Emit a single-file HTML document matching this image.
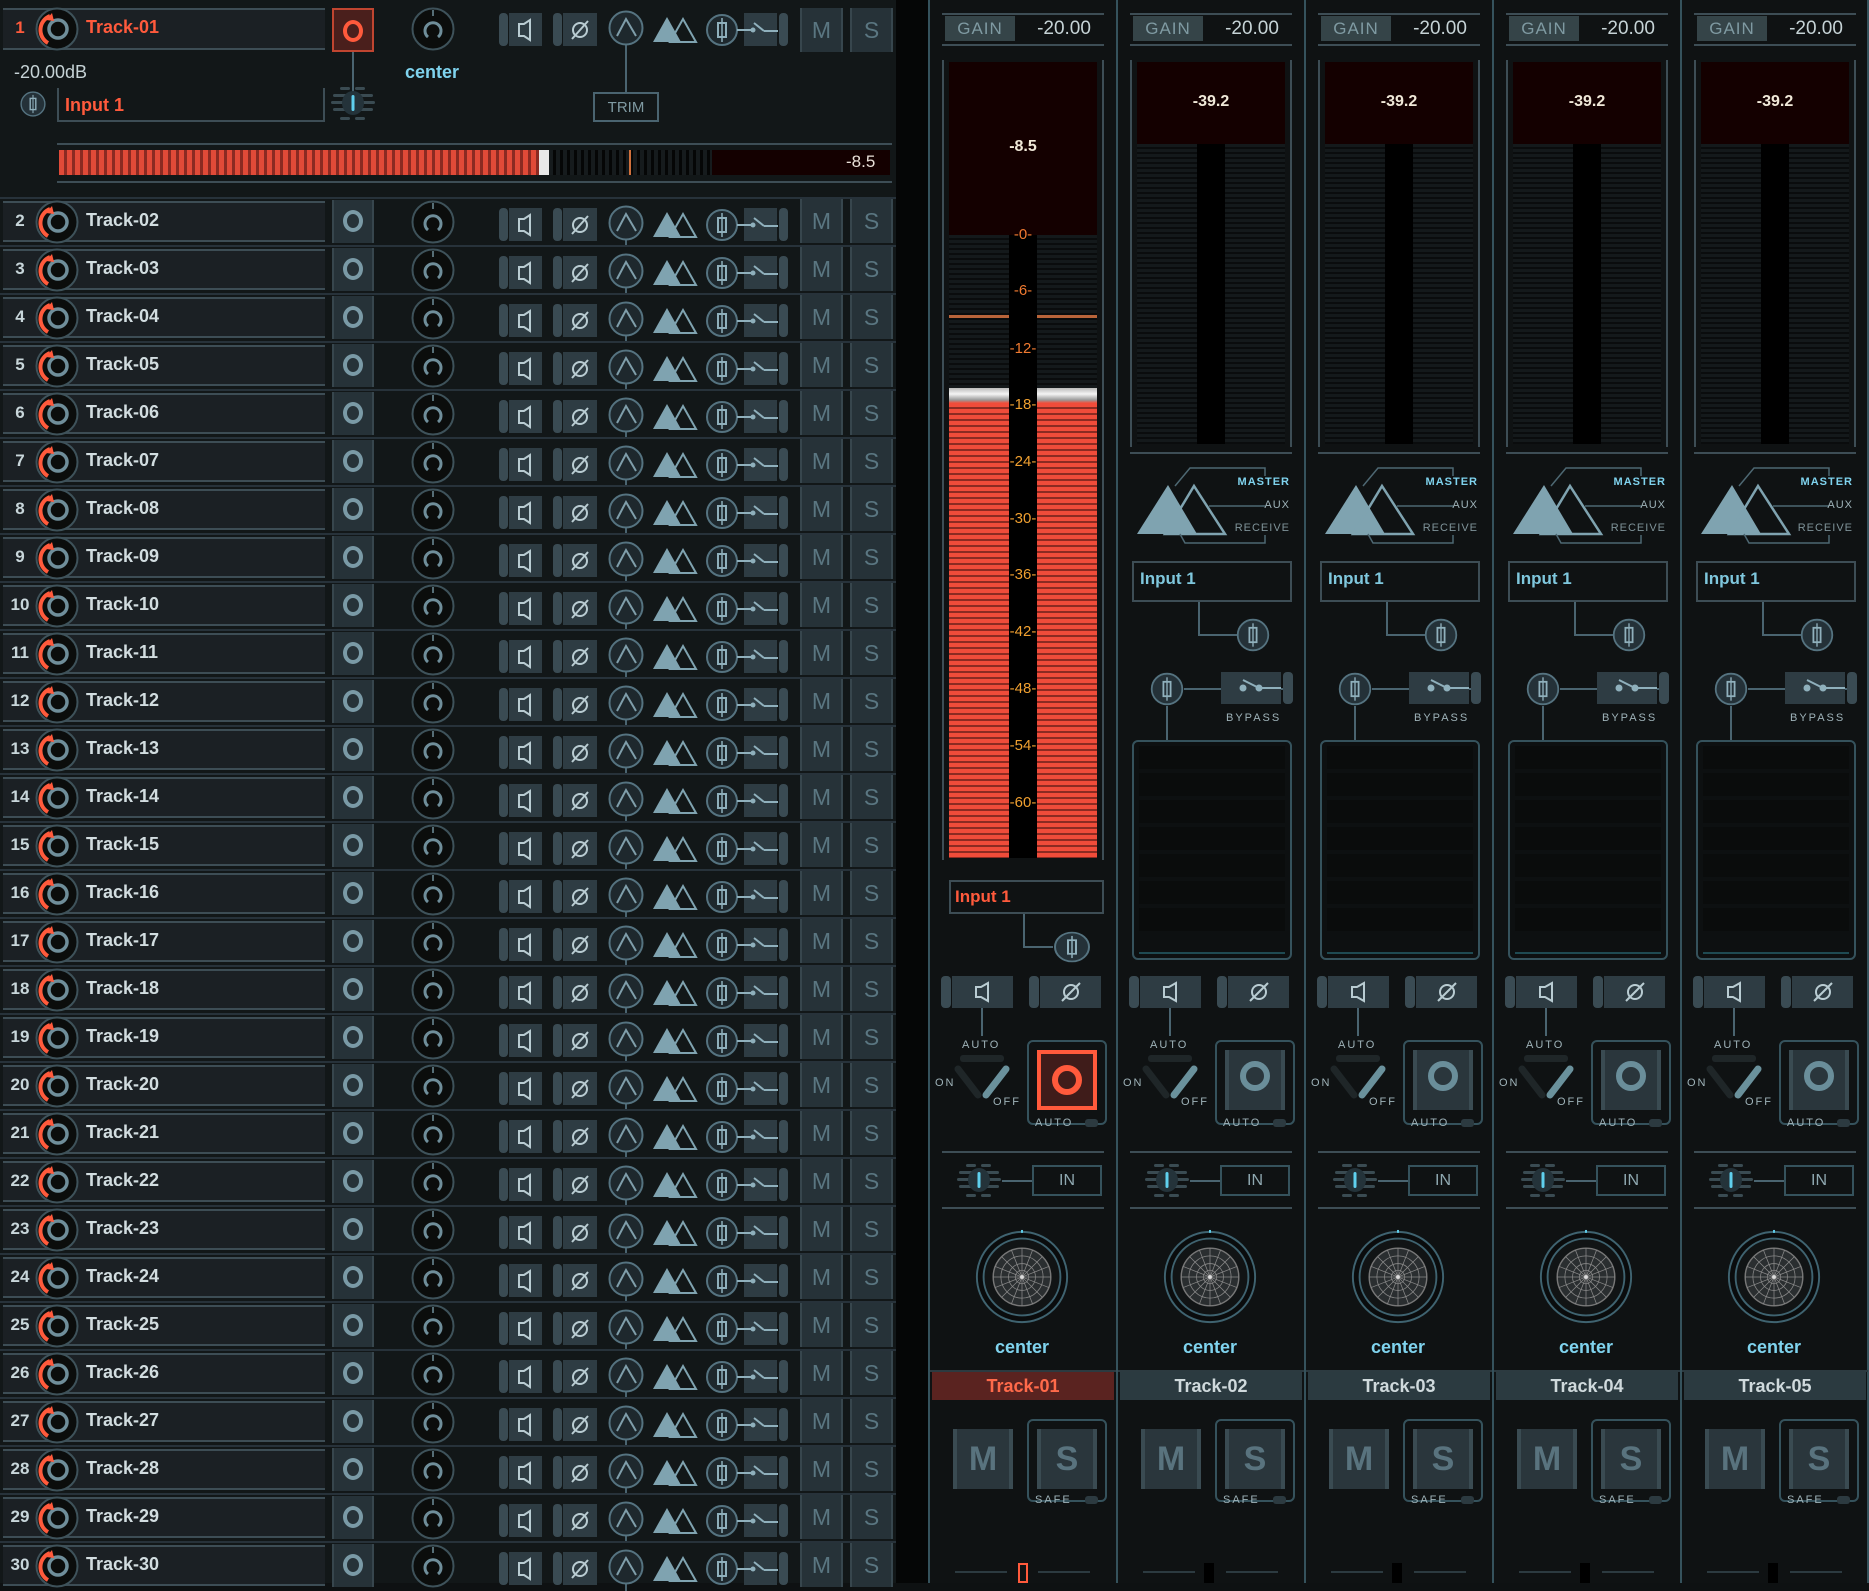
<!DOCTYPE html>
<html><head><meta charset="utf-8">
<style>
*{margin:0;padding:0;box-sizing:border-box}
body{width:1869px;height:1583px;background:#0e1112;overflow:hidden;position:relative;font-family:"Liberation Sans",sans-serif;font-weight:bold}
.a{position:absolute}
#left{position:absolute;left:0;top:0;width:896px;height:1583px;background:#121718}
.r{position:absolute;left:0;width:896px;height:48px;border-top:2px solid #27323a}
.nb{position:absolute;left:3px;top:2px;width:322px;height:41px;background:#1b2024;border-top:2px solid #3d4d55;border-bottom:2px solid #3d4d55}
.n{position:absolute;left:2px;width:36px;top:12px;text-align:center;font-size:17px;color:#c8d6da}
.k{position:absolute;left:35px;top:1px;width:44px;height:44px}
.t{position:absolute;left:86px;top:11px;font-size:18px;color:#d2dde0}
.rec{position:absolute;left:332px;top:1px;width:42px;height:43px;background:#263238;border-left:2px solid #37464d;border-right:2px solid #37464d}
.rec i{position:absolute;left:9px;top:10px;width:20px;height:22px;border:4px solid #7a9aa6;border-radius:50%}
.pk{position:absolute;left:411px;top:1px;width:44px;height:44px}
.tl{position:absolute;left:490px;top:0;width:310px;height:48px}
.m,.s{position:absolute;top:0;width:43px;height:44px;background:#263238;border-left:2px solid #37464d;border-right:2px solid #37464d;color:#5a7681;font-size:23px;text-align:center;line-height:44px;font-weight:normal}
.m{left:800px}.s{left:850px}
.st{position:absolute;top:0;width:188px;height:1583px;border-left:2px solid #35525c;background:#0f1213}
.gl{position:absolute;left:15px;top:16px;width:70px;height:25px;background:#354448;color:#7f9aa2;font-size:17px;text-align:center;line-height:25px;letter-spacing:1px;font-weight:normal}
.gv{position:absolute;left:94px;top:18px;width:80px;text-align:center;color:#c6d3d6;font-size:19px;font-weight:normal}
.gbox{position:absolute;left:12px;top:13px;width:162px;height:33px;border-top:2px solid #3d4d55;border-bottom:2px solid #3d4d55}
.mf{position:absolute;left:12px;top:60px;width:162px;border-left:2px solid #3d4d55;border-right:2px solid #3d4d55}
.dm{position:absolute;left:19px;width:148px;background:repeating-linear-gradient(180deg,#14191b 0 3px,#0a0c0d 3px 5px)}
.dr{position:absolute;left:19px;width:148px;background:#140000}
.col{position:absolute;left:79px;width:28px;background:#000}
.rv{position:absolute;left:19px;width:148px;text-align:center;color:#f0e8d8;font-size:16px}
.ib{position:absolute;left:14px;width:160px;border-top:2px solid #3d4d55;border-bottom:2px solid #3d4d55;border-left:2px solid #3d4d55;border-right:2px solid #3d4d55}
.ib span{position:absolute;left:6px;top:6px;font-size:17px}
.lbl{position:absolute;font-size:11px;color:#9fb3b9;letter-spacing:2px;font-weight:normal}
.ins{position:absolute;left:14px;top:740px;width:160px;height:220px;border:2px solid #35525c;border-radius:6px;background:#0d1011}
.ins::before{content:"";position:absolute;left:5px;top:4px;width:146px;height:189px;background:repeating-linear-gradient(180deg,#0a0c0c 0 23px,#0d1011 23px 27px)}
.ins::after{content:"";position:absolute;left:5px;bottom:4px;width:146px;height:2px;background:#1f4a52}
.btn{position:absolute;top:976px;height:32px}
.nm{position:absolute;left:2px;top:1372px;width:182px;height:28px;background:#2b3a40;color:#cfd9dc;font-size:18px;text-align:center;line-height:28px}
.cen{position:absolute;left:0;width:184px;top:1337px;text-align:center;color:#7fd3ee;font-size:18px}
.bm,.bs{position:absolute;top:1429px;width:60px;height:60px;background:#2a363c;border-left:4px solid #3a4b52;border-right:4px solid #3a4b52;color:#59737e;font-size:34px;text-align:center;line-height:60px}
.bm{left:23px}.bs{left:107px}
.sbox{position:absolute;left:97px;top:1419px;width:80px;height:83px;border:2px solid #35525c;border-radius:6px}
.snd{position:absolute;left:0;top:460px;width:188px;height:90px}
.sl{position:absolute;right:14px;font-size:11px;letter-spacing:1px;font-weight:normal;color:#9fb3b9}
.sc{position:absolute;left:73px;width:40px;color:#f08a30;font-size:15px;text-align:center;font-weight:normal}
</style></head><body>
<svg width="0" height="0" style="position:absolute">
<defs>
<symbol id="knob" viewBox="0 0 44 44"><circle cx="22" cy="22" r="20.5" fill="#0b0d0c" stroke="#3e525a" stroke-width="2"/><circle cx="23" cy="22" r="9" fill="none" stroke="#6f8e9a" stroke-width="3.5"/><path d="M13 36 A15 15 0 0 1 15 9" fill="none" stroke="#ff5a3c" stroke-width="4"/><path d="M11 13 L17 6 L19 14 Z" fill="#ff5a3c"/></symbol>
<symbol id="pan" viewBox="0 0 44 44"><circle cx="22" cy="22" r="20.5" fill="#0b0d0c" stroke="#3e525a" stroke-width="2"/><path d="M17 30 A8 8 0 1 1 27 30" fill="none" stroke="#6f8e9a" stroke-width="3"/><line x1="22" y1="3" x2="22" y2="9" stroke="#6f8e9a" stroke-width="1.5"/></symbol>
<symbol id="tools" viewBox="0 0 310 48">
<rect x="9" y="9" width="9" height="33" rx="4" fill="#3a4b53"/><rect x="19" y="9" width="33" height="33" fill="#2e3c43"/><path d="M29 20 h5 l6 -4 v20 l-6 -4 h-5 z" fill="none" stroke="#b9ccd2" stroke-width="2"/>
<rect x="63" y="9" width="9" height="33" rx="4" fill="#3a4b53"/><rect x="73" y="9" width="34" height="33" fill="#2e3c43"/><circle cx="90" cy="26" r="7" fill="none" stroke="#b9ccd2" stroke-width="2"/><line x1="82" y1="35" x2="98" y2="17" stroke="#b9ccd2" stroke-width="2"/>
<line x1="136" y1="40" x2="136" y2="48" stroke="#4a6470" stroke-width="2"/><circle cx="136" cy="24" r="16.5" fill="#1e282d" stroke="#557380" stroke-width="2"/><path d="M127 32 L136 15 L146 32" fill="none" stroke="#7f9eaa" stroke-width="2"/>
<polygon points="163,38 177,13 191,38" fill="#7fa3b0"/><polygon points="180,38 193,15 206,38" fill="none" stroke="#7fa3b0" stroke-width="2"/>
<circle cx="232" cy="26" r="15" fill="#1e282d" stroke="#557380" stroke-width="2"/><rect x="228" y="19" width="8" height="14" fill="none" stroke="#8fb0bc" stroke-width="2"/><line x1="232" y1="14" x2="232" y2="38" stroke="#8fb0bc" stroke-width="1.5"/>
<rect x="254" y="9" width="33" height="33" fill="#2e3c43"/><rect x="289" y="9" width="9" height="33" rx="4" fill="#3a4b53"/><line x1="247" y1="26" x2="262" y2="26" stroke="#8fb0bc" stroke-width="2"/><circle cx="263" cy="26" r="2.5" fill="#8fb0bc"/><line x1="264" y1="19" x2="274" y2="27" stroke="#8fb0bc" stroke-width="2"/><line x1="274" y1="27" x2="288" y2="27" stroke="#8fb0bc" stroke-width="2"/>
</symbol>
<symbol id="mic" viewBox="0 0 40 40"><circle cx="20" cy="20" r="17" fill="#243138" stroke="#557380" stroke-width="2"/><rect x="16" y="12" width="8" height="16" fill="none" stroke="#8fb0bc" stroke-width="2"/><line x1="20" y1="7" x2="20" y2="33" stroke="#8fb0bc" stroke-width="1.5"/></symbol>
<symbol id="fad" viewBox="0 0 44 36"><g fill="#3a4b52"><rect x="9" y="1" width="10" height="3" rx="1.5"/><rect x="24" y="1" width="10" height="3" rx="1.5"/><rect x="2" y="8" width="40" height="3" rx="1.5"/><rect x="0" y="15" width="44" height="3" rx="1.5"/><rect x="2" y="22" width="40" height="3" rx="1.5"/><rect x="9" y="31" width="10" height="3" rx="1.5"/><rect x="24" y="31" width="10" height="3" rx="1.5"/></g><ellipse cx="22" cy="17" rx="11" ry="12" fill="#24333a"/><rect x="20.5" y="9" width="3" height="16" rx="1.5" fill="#5fd0ee"/></symbol>
<symbol id="panbig" viewBox="0 0 100 100"><circle cx="50" cy="50" r="47" fill="#0a0c0d" stroke="#3f6370" stroke-width="2"/><circle cx="50" cy="50" r="40" fill="#111415" stroke="#3f6370" stroke-width="2"/><circle cx="50" cy="50" r="30" fill="#2a2e30" stroke="#777" stroke-width="1.5"/><g stroke="#888" stroke-width="0.8" fill="none"><circle cx="50" cy="50" r="22"/><circle cx="50" cy="50" r="14"/><circle cx="50" cy="50" r="7"/><path d="M50 20V80M20 50H80M29 29L71 71M71 29L29 71M39 22L61 78M61 22L39 78M22 39L78 61M22 61L78 39"/></g><circle cx="50" cy="50" r="2" fill="#ddd"/><rect x="49" y="1" width="2" height="3" fill="#5fd0ee"/></symbol>
<symbol id="sends" viewBox="0 0 188 90"><polygon points="19,74 50,25 79,74" fill="#7fa3b0"/><polygon points="47,74 76,26 107,74" fill="none" stroke="#7fa3b0" stroke-width="2.5"/><path d="M57 26 L72 8 H147 V16" fill="none" stroke="#4d6772" stroke-width="1.5"/><path d="M91 46 H147" stroke="#4d6772" stroke-width="1.5"/><path d="M62 74 L67 83 H147 V75" fill="none" stroke="#4d6772" stroke-width="1.5"/></symbol>
</defs></svg>

<div id="left">
<div class="nb" style="top:8px;height:42px"></div>
<span class="n" style="top:18px;color:#ff5a3c">1</span>
<svg class="k" style="top:7px"><use href="#knob"/></svg>
<span class="t" style="top:17px;color:#ff5a3c">Track-01</span>
<div class="a" style="left:332px;top:8px;width:42px;height:44px;background:#4a1f1c;border:2px solid #c04530"><i class="a" style="left:9px;top:10px;width:20px;height:22px;border:4px solid #ff5a3c;border-radius:50%"></i></div>
<div class="a" style="left:352px;top:52px;width:2px;height:40px;background:#4a6470"></div>
<svg class="pk" style="top:7px"><use href="#pan"/></svg>
<svg class="tl" style="top:4px;height:48px"><use href="#tools"/></svg>
<div class="m" style="top:8px">M</div><div class="s" style="top:8px">S</div>
<div class="a" style="left:625px;top:52px;width:2px;height:42px;background:#4a6470"></div>
<div class="a" style="left:593px;top:92px;width:66px;height:30px;border:2px solid #4a6470;color:#7f9aa2;font-size:15px;text-align:center;line-height:27px;font-weight:normal">TRIM</div>
<div class="a" style="left:14px;top:62px;font-size:18px;color:#c6d3d6;font-weight:normal">-20.00dB</div>
<div class="a" style="left:405px;top:62px;font-size:18px;color:#7fd3ee">center</div>
<svg class="a" style="left:19px;top:90px;width:28px;height:28px" viewBox="0 0 40 40"><use href="#mic"/></svg>
<div class="a" style="left:57px;top:88px;width:268px;height:34px;border-left:2px solid #3d4d55;border-right:2px solid #3d4d55;border-bottom:2px solid #3d4d55"></div>
<div class="a" style="left:65px;top:95px;font-size:18px;color:#ff5a3c">Input 1</div>
<svg class="a" style="left:331px;top:86px;width:44px;height:36px"><use href="#fad"/></svg>
<div class="a" style="left:57px;top:143px;width:835px;height:2px;background:#3d4d55"></div>
<div class="a" style="left:57px;top:181px;width:835px;height:2px;background:#3d4d55"></div>
<div class="a" style="left:59px;top:150px;width:480px;height:25px;background:repeating-linear-gradient(90deg,#e04a38 0 5px,#8a2a22 5px 8px)"></div>
<div class="a" style="left:539px;top:150px;width:10px;height:25px;background:#e8e8e8"></div>
<div class="a" style="left:549px;top:150px;width:163px;height:25px;background:repeating-linear-gradient(90deg,#161b1d 0 4px,#050606 4px 7px)"></div>
<div class="a" style="left:629px;top:150px;width:2px;height:25px;background:#d0703c"></div>
<div class="a" style="left:712px;top:150px;width:178px;height:25px;background:#140000"></div>
<div class="a" style="left:846px;top:152px;font-size:17px;color:#e8e0d8;font-weight:normal">-8.5</div>

<div class="r" style="top:197px"><div class="nb"></div><span class="n">2</span><svg class="k"><use href="#knob"/></svg><span class="t">Track-02</span><div class="rec"><i></i></div><svg class="pk"><use href="#pan"/></svg><svg class="tl"><use href="#tools"/></svg><div class="m">M</div><div class="s">S</div></div>
<div class="r" style="top:245px"><div class="nb"></div><span class="n">3</span><svg class="k"><use href="#knob"/></svg><span class="t">Track-03</span><div class="rec"><i></i></div><svg class="pk"><use href="#pan"/></svg><svg class="tl"><use href="#tools"/></svg><div class="m">M</div><div class="s">S</div></div>
<div class="r" style="top:293px"><div class="nb"></div><span class="n">4</span><svg class="k"><use href="#knob"/></svg><span class="t">Track-04</span><div class="rec"><i></i></div><svg class="pk"><use href="#pan"/></svg><svg class="tl"><use href="#tools"/></svg><div class="m">M</div><div class="s">S</div></div>
<div class="r" style="top:341px"><div class="nb"></div><span class="n">5</span><svg class="k"><use href="#knob"/></svg><span class="t">Track-05</span><div class="rec"><i></i></div><svg class="pk"><use href="#pan"/></svg><svg class="tl"><use href="#tools"/></svg><div class="m">M</div><div class="s">S</div></div>
<div class="r" style="top:389px"><div class="nb"></div><span class="n">6</span><svg class="k"><use href="#knob"/></svg><span class="t">Track-06</span><div class="rec"><i></i></div><svg class="pk"><use href="#pan"/></svg><svg class="tl"><use href="#tools"/></svg><div class="m">M</div><div class="s">S</div></div>
<div class="r" style="top:437px"><div class="nb"></div><span class="n">7</span><svg class="k"><use href="#knob"/></svg><span class="t">Track-07</span><div class="rec"><i></i></div><svg class="pk"><use href="#pan"/></svg><svg class="tl"><use href="#tools"/></svg><div class="m">M</div><div class="s">S</div></div>
<div class="r" style="top:485px"><div class="nb"></div><span class="n">8</span><svg class="k"><use href="#knob"/></svg><span class="t">Track-08</span><div class="rec"><i></i></div><svg class="pk"><use href="#pan"/></svg><svg class="tl"><use href="#tools"/></svg><div class="m">M</div><div class="s">S</div></div>
<div class="r" style="top:533px"><div class="nb"></div><span class="n">9</span><svg class="k"><use href="#knob"/></svg><span class="t">Track-09</span><div class="rec"><i></i></div><svg class="pk"><use href="#pan"/></svg><svg class="tl"><use href="#tools"/></svg><div class="m">M</div><div class="s">S</div></div>
<div class="r" style="top:581px"><div class="nb"></div><span class="n">10</span><svg class="k"><use href="#knob"/></svg><span class="t">Track-10</span><div class="rec"><i></i></div><svg class="pk"><use href="#pan"/></svg><svg class="tl"><use href="#tools"/></svg><div class="m">M</div><div class="s">S</div></div>
<div class="r" style="top:629px"><div class="nb"></div><span class="n">11</span><svg class="k"><use href="#knob"/></svg><span class="t">Track-11</span><div class="rec"><i></i></div><svg class="pk"><use href="#pan"/></svg><svg class="tl"><use href="#tools"/></svg><div class="m">M</div><div class="s">S</div></div>
<div class="r" style="top:677px"><div class="nb"></div><span class="n">12</span><svg class="k"><use href="#knob"/></svg><span class="t">Track-12</span><div class="rec"><i></i></div><svg class="pk"><use href="#pan"/></svg><svg class="tl"><use href="#tools"/></svg><div class="m">M</div><div class="s">S</div></div>
<div class="r" style="top:725px"><div class="nb"></div><span class="n">13</span><svg class="k"><use href="#knob"/></svg><span class="t">Track-13</span><div class="rec"><i></i></div><svg class="pk"><use href="#pan"/></svg><svg class="tl"><use href="#tools"/></svg><div class="m">M</div><div class="s">S</div></div>
<div class="r" style="top:773px"><div class="nb"></div><span class="n">14</span><svg class="k"><use href="#knob"/></svg><span class="t">Track-14</span><div class="rec"><i></i></div><svg class="pk"><use href="#pan"/></svg><svg class="tl"><use href="#tools"/></svg><div class="m">M</div><div class="s">S</div></div>
<div class="r" style="top:821px"><div class="nb"></div><span class="n">15</span><svg class="k"><use href="#knob"/></svg><span class="t">Track-15</span><div class="rec"><i></i></div><svg class="pk"><use href="#pan"/></svg><svg class="tl"><use href="#tools"/></svg><div class="m">M</div><div class="s">S</div></div>
<div class="r" style="top:869px"><div class="nb"></div><span class="n">16</span><svg class="k"><use href="#knob"/></svg><span class="t">Track-16</span><div class="rec"><i></i></div><svg class="pk"><use href="#pan"/></svg><svg class="tl"><use href="#tools"/></svg><div class="m">M</div><div class="s">S</div></div>
<div class="r" style="top:917px"><div class="nb"></div><span class="n">17</span><svg class="k"><use href="#knob"/></svg><span class="t">Track-17</span><div class="rec"><i></i></div><svg class="pk"><use href="#pan"/></svg><svg class="tl"><use href="#tools"/></svg><div class="m">M</div><div class="s">S</div></div>
<div class="r" style="top:965px"><div class="nb"></div><span class="n">18</span><svg class="k"><use href="#knob"/></svg><span class="t">Track-18</span><div class="rec"><i></i></div><svg class="pk"><use href="#pan"/></svg><svg class="tl"><use href="#tools"/></svg><div class="m">M</div><div class="s">S</div></div>
<div class="r" style="top:1013px"><div class="nb"></div><span class="n">19</span><svg class="k"><use href="#knob"/></svg><span class="t">Track-19</span><div class="rec"><i></i></div><svg class="pk"><use href="#pan"/></svg><svg class="tl"><use href="#tools"/></svg><div class="m">M</div><div class="s">S</div></div>
<div class="r" style="top:1061px"><div class="nb"></div><span class="n">20</span><svg class="k"><use href="#knob"/></svg><span class="t">Track-20</span><div class="rec"><i></i></div><svg class="pk"><use href="#pan"/></svg><svg class="tl"><use href="#tools"/></svg><div class="m">M</div><div class="s">S</div></div>
<div class="r" style="top:1109px"><div class="nb"></div><span class="n">21</span><svg class="k"><use href="#knob"/></svg><span class="t">Track-21</span><div class="rec"><i></i></div><svg class="pk"><use href="#pan"/></svg><svg class="tl"><use href="#tools"/></svg><div class="m">M</div><div class="s">S</div></div>
<div class="r" style="top:1157px"><div class="nb"></div><span class="n">22</span><svg class="k"><use href="#knob"/></svg><span class="t">Track-22</span><div class="rec"><i></i></div><svg class="pk"><use href="#pan"/></svg><svg class="tl"><use href="#tools"/></svg><div class="m">M</div><div class="s">S</div></div>
<div class="r" style="top:1205px"><div class="nb"></div><span class="n">23</span><svg class="k"><use href="#knob"/></svg><span class="t">Track-23</span><div class="rec"><i></i></div><svg class="pk"><use href="#pan"/></svg><svg class="tl"><use href="#tools"/></svg><div class="m">M</div><div class="s">S</div></div>
<div class="r" style="top:1253px"><div class="nb"></div><span class="n">24</span><svg class="k"><use href="#knob"/></svg><span class="t">Track-24</span><div class="rec"><i></i></div><svg class="pk"><use href="#pan"/></svg><svg class="tl"><use href="#tools"/></svg><div class="m">M</div><div class="s">S</div></div>
<div class="r" style="top:1301px"><div class="nb"></div><span class="n">25</span><svg class="k"><use href="#knob"/></svg><span class="t">Track-25</span><div class="rec"><i></i></div><svg class="pk"><use href="#pan"/></svg><svg class="tl"><use href="#tools"/></svg><div class="m">M</div><div class="s">S</div></div>
<div class="r" style="top:1349px"><div class="nb"></div><span class="n">26</span><svg class="k"><use href="#knob"/></svg><span class="t">Track-26</span><div class="rec"><i></i></div><svg class="pk"><use href="#pan"/></svg><svg class="tl"><use href="#tools"/></svg><div class="m">M</div><div class="s">S</div></div>
<div class="r" style="top:1397px"><div class="nb"></div><span class="n">27</span><svg class="k"><use href="#knob"/></svg><span class="t">Track-27</span><div class="rec"><i></i></div><svg class="pk"><use href="#pan"/></svg><svg class="tl"><use href="#tools"/></svg><div class="m">M</div><div class="s">S</div></div>
<div class="r" style="top:1445px"><div class="nb"></div><span class="n">28</span><svg class="k"><use href="#knob"/></svg><span class="t">Track-28</span><div class="rec"><i></i></div><svg class="pk"><use href="#pan"/></svg><svg class="tl"><use href="#tools"/></svg><div class="m">M</div><div class="s">S</div></div>
<div class="r" style="top:1493px"><div class="nb"></div><span class="n">29</span><svg class="k"><use href="#knob"/></svg><span class="t">Track-29</span><div class="rec"><i></i></div><svg class="pk"><use href="#pan"/></svg><svg class="tl"><use href="#tools"/></svg><div class="m">M</div><div class="s">S</div></div>
<div class="r" style="top:1541px"><div class="nb"></div><span class="n">30</span><svg class="k"><use href="#knob"/></svg><span class="t">Track-30</span><div class="rec"><i></i></div><svg class="pk"><use href="#pan"/></svg><svg class="tl"><use href="#tools"/></svg><div class="m">M</div><div class="s">S</div></div>
</div>
<div class="a" style="left:896px;top:0;width:33px;height:1583px;background:#050606"></div>

<!-- STRIP 1 -->
<div class="st" style="left:928px">
<div class="gbox"></div><div class="gl">GAIN</div><div class="gv">-20.00</div>
<div class="mf" style="height:800px"></div>
<div class="dr" style="top:62px;height:173px"></div>
<div class="rv" style="top:138px">-8.5</div>
<div class="dm" style="top:235px;height:153px"></div>
<div class="a" style="left:19px;top:315px;width:148px;height:3px;background:#b8643a"></div>
<div class="a" style="left:19px;top:388px;width:148px;height:15px;background:linear-gradient(#bbb,#f4f4f4 40%,#999 80%,#f0503c)"></div>
<div class="a" style="left:19px;top:403px;width:148px;height:455px;background:repeating-linear-gradient(180deg,#f04c3a 0 4px,#8c2b22 4px 6px)"></div>
<div class="col" style="top:235px;height:623px"></div>
<div class="sc" style="top:226px;color:#f07a30">-0-</div>
<div class="sc" style="top:282px;color:#f07a30">-6-</div>
<div class="sc" style="top:340px;color:#f07a30">-12-</div>
<div class="a" style="left:73px;top:377px;width:40px;color:#f0a030;font-size:15px;text-align:center;line-height:56.8px;font-weight:normal">-18-<br>-24-<br>-30-<br>-36-<br>-42-<br>-48-<br>-54-<br>-60-</div>
<div class="ib" style="left:19px;top:880px;width:155px;height:34px;border-top:2px solid #3d4d55"><span style="color:#ff5a3c;left:4px;top:5px">Input 1</span></div>
<div class="a" style="left:93px;top:914px;width:2px;height:33px;background:#4a6470"></div>
<div class="a" style="left:93px;top:946px;width:30px;height:2px;background:#4a6470"></div>
<svg class="a" style="left:122px;top:930px;width:40px;height:34px" viewBox="0 0 40 40" preserveAspectRatio="none"><use href="#mic"/></svg>
<div class="btn" style="left:11px;width:10px;background:#3a4b53;border-radius:4px"></div>
<div class="btn" style="left:22px;width:61px;background:#2e3c43"><svg class="a" style="left:20px;top:5px;width:22px;height:22px" viewBox="0 0 22 22"><path d="M4 6h5l7-4v18l-7-4H4z" fill="none" stroke="#b9ccd2" stroke-width="2"/></svg></div>
<div class="btn" style="left:99px;width:10px;background:#3a4b53;border-radius:4px"></div>
<div class="btn" style="left:110px;width:61px;background:#2e3c43"><svg class="a" style="left:19px;top:4px;width:24px;height:24px" viewBox="0 0 24 24"><circle cx="12" cy="12" r="7" fill="none" stroke="#b9ccd2" stroke-width="2"/><line x1="3" y1="21" x2="21" y2="3" stroke="#b9ccd2" stroke-width="2"/></svg></div>
<div class="a" style="left:51px;top:1008px;width:2px;height:28px;background:#4a6470"></div>
<div class="lbl" style="left:32px;top:1039px">AUTO</div>
<div class="lbl" style="left:5px;top:1077px">ON</div>
<div class="lbl" style="left:63px;top:1096px">OFF</div>
<svg class="a" style="left:22px;top:1055px;width:60px;height:48px" viewBox="0 0 60 48"><rect x="8" y="0" width="44" height="7" rx="3" fill="#1f2628"/><line x1="6" y1="14" x2="26" y2="40" stroke="#1f2628" stroke-width="7" stroke-linecap="round"/><line x1="54" y1="14" x2="34" y2="40" stroke="#6a919c" stroke-width="7" stroke-linecap="round"/></svg>
<div class="a" style="left:97px;top:1040px;width:80px;height:85px;border:2px solid #35525c;border-radius:6px"></div>
<div class="a" style="left:107px;top:1050px;width:60px;height:60px;background:#3f1c1a;border:4px solid #ff5a3c"><i class="a" style="left:11px;top:11px;width:30px;height:30px;border:6px solid #ff5a3c;border-radius:50%"></i></div>
<div class="lbl" style="left:105px;top:1117px">AUTO</div><div class="a" style="left:155px;top:1119px;width:13px;height:8px;border-radius:3px;background:#2c3a40"></div>
<div class="a" style="left:12px;top:1151px;width:162px;height:2px;background:#3d4d55"></div>
<div class="a" style="left:12px;top:1207px;width:162px;height:2px;background:#3d4d55"></div>
<svg class="a" style="left:27px;top:1163px;width:44px;height:36px"><use href="#fad"/></svg>
<div class="a" style="left:72px;top:1180px;width:30px;height:2px;background:#4a6470"></div>
<div class="a" style="left:102px;top:1165px;width:70px;height:31px;border:2px solid #35525c;color:#8fa8b0;font-size:16px;text-align:center;line-height:27px;font-weight:normal">IN</div>
<svg class="a" style="left:44px;top:1229px;width:96px;height:96px"><use href="#panbig"/></svg>
<div class="cen">center</div>
<div class="a" style="left:0;top:1370px;width:186px;height:2px;background:#2c3a40"></div>
<div class="nm" style="background:#5a2320;color:#ff6a4a">Track-01</div>
<div class="bm">M</div><div class="sbox"></div><div class="bs">S</div>
<div class="lbl" style="left:105px;top:1494px">SAFE</div><div class="a" style="left:155px;top:1496px;width:13px;height:8px;border-radius:3px;background:#2c3a40"></div>
<div class="a" style="left:25px;top:1571px;width:52px;height:2px;background:#2c3a40"></div><div class="a" style="left:108px;top:1571px;width:52px;height:2px;background:#2c3a40"></div>
<div class="a" style="left:88px;top:1563px;width:10px;height:20px;border:2px solid #ff5a3c"></div>
</div>

<!-- STRIP 2 -->
<div class="st" style="left:1116px">
<div class="gbox"></div><div class="gl">GAIN</div><div class="gv">-20.00</div>
<div class="mf" style="height:387px"></div><div class="a" style="left:12px;top:452px;width:162px;height:2px;background:#3d4d55"></div>
<div class="dr" style="top:62px;height:82px"></div><div class="rv" style="top:93px">-39.2</div>
<div class="dm" style="top:144px;height:300px"></div><div class="col" style="top:144px;height:300px"></div>
<svg class="snd"><use href="#sends"/></svg>
<div class="sl" style="top:476px;color:#7fd3ee;font-weight:bold">MASTER</div>
<div class="sl" style="top:499px">AUX</div>
<div class="sl" style="top:522px;color:#7f9399">RECEIVE</div>
<div class="ib" style="top:561px;height:41px"><span style="color:#7fc7dd">Input 1</span></div>
<div class="a" style="left:80px;top:602px;width:2px;height:33px;background:#4a6470"></div><div class="a" style="left:80px;top:634px;width:40px;height:2px;background:#4a6470"></div>
<svg class="a" style="left:117px;top:617px;width:36px;height:36px" viewBox="0 0 40 40"><use href="#mic"/></svg>
<svg class="a" style="left:31px;top:671px;width:36px;height:36px" viewBox="0 0 40 40"><use href="#mic"/></svg>
<div class="a" style="left:66px;top:688px;width:100px;height:2px;background:#4a6470"></div>
<div class="a" style="left:48px;top:706px;width:2px;height:34px;background:#4a6470"></div>
<div class="a" style="left:103px;top:672px;width:60px;height:32px;background:#2e3c43"></div><div class="a" style="left:165px;top:672px;width:10px;height:32px;background:#3a4b53;border-radius:4px"></div>
<svg class="a" style="left:103px;top:672px;width:60px;height:32px" viewBox="0 0 60 32"><circle cx="22" cy="16" r="3.5" fill="#8fb0bc"/><circle cx="38" cy="16" r="3.5" fill="#8fb0bc"/><line x1="22" y1="8" x2="38" y2="16" stroke="#8fb0bc" stroke-width="2"/><line x1="38" y1="16" x2="60" y2="16" stroke="#8fb0bc" stroke-width="2"/></svg>
<div class="lbl" style="left:108px;top:712px">BYPASS</div>
<div class="ins"></div>
<div class="btn" style="left:11px;width:10px;background:#3a4b53;border-radius:4px"></div>
<div class="btn" style="left:22px;width:61px;background:#2e3c43"><svg class="a" style="left:20px;top:5px;width:22px;height:22px" viewBox="0 0 22 22"><path d="M4 6h5l7-4v18l-7-4H4z" fill="none" stroke="#b9ccd2" stroke-width="2"/></svg></div>
<div class="btn" style="left:99px;width:10px;background:#3a4b53;border-radius:4px"></div>
<div class="btn" style="left:110px;width:61px;background:#2e3c43"><svg class="a" style="left:19px;top:4px;width:24px;height:24px" viewBox="0 0 24 24"><circle cx="12" cy="12" r="7" fill="none" stroke="#b9ccd2" stroke-width="2"/><line x1="3" y1="21" x2="21" y2="3" stroke="#b9ccd2" stroke-width="2"/></svg></div>
<div class="a" style="left:51px;top:1008px;width:2px;height:28px;background:#4a6470"></div>
<div class="lbl" style="left:32px;top:1039px">AUTO</div><div class="lbl" style="left:5px;top:1077px">ON</div><div class="lbl" style="left:63px;top:1096px">OFF</div>
<svg class="a" style="left:22px;top:1055px;width:60px;height:48px" viewBox="0 0 60 48"><rect x="8" y="0" width="44" height="7" rx="3" fill="#1f2628"/><line x1="6" y1="14" x2="26" y2="40" stroke="#1f2628" stroke-width="7" stroke-linecap="round"/><line x1="54" y1="14" x2="34" y2="40" stroke="#6a919c" stroke-width="7" stroke-linecap="round"/></svg>
<div class="a" style="left:97px;top:1040px;width:80px;height:85px;border:2px solid #35525c;border-radius:6px"></div>
<div class="a" style="left:107px;top:1050px;width:60px;height:60px;background:#2a363c;border-left:4px solid #3a4b52;border-right:4px solid #3a4b52"><i class="a" style="left:11px;top:11px;width:30px;height:30px;border:6px solid #6a8e9a;border-radius:50%"></i></div>
<div class="lbl" style="left:105px;top:1117px">AUTO</div><div class="a" style="left:155px;top:1119px;width:13px;height:8px;border-radius:3px;background:#2c3a40"></div>
<div class="a" style="left:12px;top:1151px;width:162px;height:2px;background:#3d4d55"></div><div class="a" style="left:12px;top:1207px;width:162px;height:2px;background:#3d4d55"></div>
<svg class="a" style="left:27px;top:1163px;width:44px;height:36px"><use href="#fad"/></svg>
<div class="a" style="left:72px;top:1180px;width:30px;height:2px;background:#4a6470"></div>
<div class="a" style="left:102px;top:1165px;width:70px;height:31px;border:2px solid #35525c;color:#8fa8b0;font-size:16px;text-align:center;line-height:27px;font-weight:normal">IN</div>
<svg class="a" style="left:44px;top:1229px;width:96px;height:96px"><use href="#panbig"/></svg>
<div class="cen">center</div>
<div class="a" style="left:0;top:1370px;width:186px;height:2px;background:#2c3a40"></div>
<div class="nm">Track-02</div>
<div class="bm">M</div><div class="sbox"></div><div class="bs">S</div>
<div class="lbl" style="left:105px;top:1494px">SAFE</div><div class="a" style="left:155px;top:1496px;width:13px;height:8px;border-radius:3px;background:#2c3a40"></div>
<div class="a" style="left:25px;top:1571px;width:52px;height:2px;background:#2c3a40"></div><div class="a" style="left:108px;top:1571px;width:52px;height:2px;background:#2c3a40"></div>
<div class="a" style="left:86px;top:1563px;width:10px;height:20px;background:#000"></div>
</div>

<!-- STRIP 3 -->
<div class="st" style="left:1304px">
<div class="gbox"></div><div class="gl">GAIN</div><div class="gv">-20.00</div>
<div class="mf" style="height:387px"></div><div class="a" style="left:12px;top:452px;width:162px;height:2px;background:#3d4d55"></div>
<div class="dr" style="top:62px;height:82px"></div><div class="rv" style="top:93px">-39.2</div>
<div class="dm" style="top:144px;height:300px"></div><div class="col" style="top:144px;height:300px"></div>
<svg class="snd"><use href="#sends"/></svg>
<div class="sl" style="top:476px;color:#7fd3ee;font-weight:bold">MASTER</div>
<div class="sl" style="top:499px">AUX</div>
<div class="sl" style="top:522px;color:#7f9399">RECEIVE</div>
<div class="ib" style="top:561px;height:41px"><span style="color:#7fc7dd">Input 1</span></div>
<div class="a" style="left:80px;top:602px;width:2px;height:33px;background:#4a6470"></div><div class="a" style="left:80px;top:634px;width:40px;height:2px;background:#4a6470"></div>
<svg class="a" style="left:117px;top:617px;width:36px;height:36px" viewBox="0 0 40 40"><use href="#mic"/></svg>
<svg class="a" style="left:31px;top:671px;width:36px;height:36px" viewBox="0 0 40 40"><use href="#mic"/></svg>
<div class="a" style="left:66px;top:688px;width:100px;height:2px;background:#4a6470"></div>
<div class="a" style="left:48px;top:706px;width:2px;height:34px;background:#4a6470"></div>
<div class="a" style="left:103px;top:672px;width:60px;height:32px;background:#2e3c43"></div><div class="a" style="left:165px;top:672px;width:10px;height:32px;background:#3a4b53;border-radius:4px"></div>
<svg class="a" style="left:103px;top:672px;width:60px;height:32px" viewBox="0 0 60 32"><circle cx="22" cy="16" r="3.5" fill="#8fb0bc"/><circle cx="38" cy="16" r="3.5" fill="#8fb0bc"/><line x1="22" y1="8" x2="38" y2="16" stroke="#8fb0bc" stroke-width="2"/><line x1="38" y1="16" x2="60" y2="16" stroke="#8fb0bc" stroke-width="2"/></svg>
<div class="lbl" style="left:108px;top:712px">BYPASS</div>
<div class="ins"></div>
<div class="btn" style="left:11px;width:10px;background:#3a4b53;border-radius:4px"></div>
<div class="btn" style="left:22px;width:61px;background:#2e3c43"><svg class="a" style="left:20px;top:5px;width:22px;height:22px" viewBox="0 0 22 22"><path d="M4 6h5l7-4v18l-7-4H4z" fill="none" stroke="#b9ccd2" stroke-width="2"/></svg></div>
<div class="btn" style="left:99px;width:10px;background:#3a4b53;border-radius:4px"></div>
<div class="btn" style="left:110px;width:61px;background:#2e3c43"><svg class="a" style="left:19px;top:4px;width:24px;height:24px" viewBox="0 0 24 24"><circle cx="12" cy="12" r="7" fill="none" stroke="#b9ccd2" stroke-width="2"/><line x1="3" y1="21" x2="21" y2="3" stroke="#b9ccd2" stroke-width="2"/></svg></div>
<div class="a" style="left:51px;top:1008px;width:2px;height:28px;background:#4a6470"></div>
<div class="lbl" style="left:32px;top:1039px">AUTO</div><div class="lbl" style="left:5px;top:1077px">ON</div><div class="lbl" style="left:63px;top:1096px">OFF</div>
<svg class="a" style="left:22px;top:1055px;width:60px;height:48px" viewBox="0 0 60 48"><rect x="8" y="0" width="44" height="7" rx="3" fill="#1f2628"/><line x1="6" y1="14" x2="26" y2="40" stroke="#1f2628" stroke-width="7" stroke-linecap="round"/><line x1="54" y1="14" x2="34" y2="40" stroke="#6a919c" stroke-width="7" stroke-linecap="round"/></svg>
<div class="a" style="left:97px;top:1040px;width:80px;height:85px;border:2px solid #35525c;border-radius:6px"></div>
<div class="a" style="left:107px;top:1050px;width:60px;height:60px;background:#2a363c;border-left:4px solid #3a4b52;border-right:4px solid #3a4b52"><i class="a" style="left:11px;top:11px;width:30px;height:30px;border:6px solid #6a8e9a;border-radius:50%"></i></div>
<div class="lbl" style="left:105px;top:1117px">AUTO</div><div class="a" style="left:155px;top:1119px;width:13px;height:8px;border-radius:3px;background:#2c3a40"></div>
<div class="a" style="left:12px;top:1151px;width:162px;height:2px;background:#3d4d55"></div><div class="a" style="left:12px;top:1207px;width:162px;height:2px;background:#3d4d55"></div>
<svg class="a" style="left:27px;top:1163px;width:44px;height:36px"><use href="#fad"/></svg>
<div class="a" style="left:72px;top:1180px;width:30px;height:2px;background:#4a6470"></div>
<div class="a" style="left:102px;top:1165px;width:70px;height:31px;border:2px solid #35525c;color:#8fa8b0;font-size:16px;text-align:center;line-height:27px;font-weight:normal">IN</div>
<svg class="a" style="left:44px;top:1229px;width:96px;height:96px"><use href="#panbig"/></svg>
<div class="cen">center</div>
<div class="a" style="left:0;top:1370px;width:186px;height:2px;background:#2c3a40"></div>
<div class="nm">Track-03</div>
<div class="bm">M</div><div class="sbox"></div><div class="bs">S</div>
<div class="lbl" style="left:105px;top:1494px">SAFE</div><div class="a" style="left:155px;top:1496px;width:13px;height:8px;border-radius:3px;background:#2c3a40"></div>
<div class="a" style="left:25px;top:1571px;width:52px;height:2px;background:#2c3a40"></div><div class="a" style="left:108px;top:1571px;width:52px;height:2px;background:#2c3a40"></div>
<div class="a" style="left:86px;top:1563px;width:10px;height:20px;background:#000"></div>
</div>

<!-- STRIP 4 -->
<div class="st" style="left:1492px">
<div class="gbox"></div><div class="gl">GAIN</div><div class="gv">-20.00</div>
<div class="mf" style="height:387px"></div><div class="a" style="left:12px;top:452px;width:162px;height:2px;background:#3d4d55"></div>
<div class="dr" style="top:62px;height:82px"></div><div class="rv" style="top:93px">-39.2</div>
<div class="dm" style="top:144px;height:300px"></div><div class="col" style="top:144px;height:300px"></div>
<svg class="snd"><use href="#sends"/></svg>
<div class="sl" style="top:476px;color:#7fd3ee;font-weight:bold">MASTER</div>
<div class="sl" style="top:499px">AUX</div>
<div class="sl" style="top:522px;color:#7f9399">RECEIVE</div>
<div class="ib" style="top:561px;height:41px"><span style="color:#7fc7dd">Input 1</span></div>
<div class="a" style="left:80px;top:602px;width:2px;height:33px;background:#4a6470"></div><div class="a" style="left:80px;top:634px;width:40px;height:2px;background:#4a6470"></div>
<svg class="a" style="left:117px;top:617px;width:36px;height:36px" viewBox="0 0 40 40"><use href="#mic"/></svg>
<svg class="a" style="left:31px;top:671px;width:36px;height:36px" viewBox="0 0 40 40"><use href="#mic"/></svg>
<div class="a" style="left:66px;top:688px;width:100px;height:2px;background:#4a6470"></div>
<div class="a" style="left:48px;top:706px;width:2px;height:34px;background:#4a6470"></div>
<div class="a" style="left:103px;top:672px;width:60px;height:32px;background:#2e3c43"></div><div class="a" style="left:165px;top:672px;width:10px;height:32px;background:#3a4b53;border-radius:4px"></div>
<svg class="a" style="left:103px;top:672px;width:60px;height:32px" viewBox="0 0 60 32"><circle cx="22" cy="16" r="3.5" fill="#8fb0bc"/><circle cx="38" cy="16" r="3.5" fill="#8fb0bc"/><line x1="22" y1="8" x2="38" y2="16" stroke="#8fb0bc" stroke-width="2"/><line x1="38" y1="16" x2="60" y2="16" stroke="#8fb0bc" stroke-width="2"/></svg>
<div class="lbl" style="left:108px;top:712px">BYPASS</div>
<div class="ins"></div>
<div class="btn" style="left:11px;width:10px;background:#3a4b53;border-radius:4px"></div>
<div class="btn" style="left:22px;width:61px;background:#2e3c43"><svg class="a" style="left:20px;top:5px;width:22px;height:22px" viewBox="0 0 22 22"><path d="M4 6h5l7-4v18l-7-4H4z" fill="none" stroke="#b9ccd2" stroke-width="2"/></svg></div>
<div class="btn" style="left:99px;width:10px;background:#3a4b53;border-radius:4px"></div>
<div class="btn" style="left:110px;width:61px;background:#2e3c43"><svg class="a" style="left:19px;top:4px;width:24px;height:24px" viewBox="0 0 24 24"><circle cx="12" cy="12" r="7" fill="none" stroke="#b9ccd2" stroke-width="2"/><line x1="3" y1="21" x2="21" y2="3" stroke="#b9ccd2" stroke-width="2"/></svg></div>
<div class="a" style="left:51px;top:1008px;width:2px;height:28px;background:#4a6470"></div>
<div class="lbl" style="left:32px;top:1039px">AUTO</div><div class="lbl" style="left:5px;top:1077px">ON</div><div class="lbl" style="left:63px;top:1096px">OFF</div>
<svg class="a" style="left:22px;top:1055px;width:60px;height:48px" viewBox="0 0 60 48"><rect x="8" y="0" width="44" height="7" rx="3" fill="#1f2628"/><line x1="6" y1="14" x2="26" y2="40" stroke="#1f2628" stroke-width="7" stroke-linecap="round"/><line x1="54" y1="14" x2="34" y2="40" stroke="#6a919c" stroke-width="7" stroke-linecap="round"/></svg>
<div class="a" style="left:97px;top:1040px;width:80px;height:85px;border:2px solid #35525c;border-radius:6px"></div>
<div class="a" style="left:107px;top:1050px;width:60px;height:60px;background:#2a363c;border-left:4px solid #3a4b52;border-right:4px solid #3a4b52"><i class="a" style="left:11px;top:11px;width:30px;height:30px;border:6px solid #6a8e9a;border-radius:50%"></i></div>
<div class="lbl" style="left:105px;top:1117px">AUTO</div><div class="a" style="left:155px;top:1119px;width:13px;height:8px;border-radius:3px;background:#2c3a40"></div>
<div class="a" style="left:12px;top:1151px;width:162px;height:2px;background:#3d4d55"></div><div class="a" style="left:12px;top:1207px;width:162px;height:2px;background:#3d4d55"></div>
<svg class="a" style="left:27px;top:1163px;width:44px;height:36px"><use href="#fad"/></svg>
<div class="a" style="left:72px;top:1180px;width:30px;height:2px;background:#4a6470"></div>
<div class="a" style="left:102px;top:1165px;width:70px;height:31px;border:2px solid #35525c;color:#8fa8b0;font-size:16px;text-align:center;line-height:27px;font-weight:normal">IN</div>
<svg class="a" style="left:44px;top:1229px;width:96px;height:96px"><use href="#panbig"/></svg>
<div class="cen">center</div>
<div class="a" style="left:0;top:1370px;width:186px;height:2px;background:#2c3a40"></div>
<div class="nm">Track-04</div>
<div class="bm">M</div><div class="sbox"></div><div class="bs">S</div>
<div class="lbl" style="left:105px;top:1494px">SAFE</div><div class="a" style="left:155px;top:1496px;width:13px;height:8px;border-radius:3px;background:#2c3a40"></div>
<div class="a" style="left:25px;top:1571px;width:52px;height:2px;background:#2c3a40"></div><div class="a" style="left:108px;top:1571px;width:52px;height:2px;background:#2c3a40"></div>
<div class="a" style="left:86px;top:1563px;width:10px;height:20px;background:#000"></div>
</div>

<!-- STRIP 5 -->
<div class="st" style="left:1680px;width:189px;border-right:2px solid #35525c">
<div class="gbox"></div><div class="gl">GAIN</div><div class="gv">-20.00</div>
<div class="mf" style="height:387px"></div><div class="a" style="left:12px;top:452px;width:162px;height:2px;background:#3d4d55"></div>
<div class="dr" style="top:62px;height:82px"></div><div class="rv" style="top:93px">-39.2</div>
<div class="dm" style="top:144px;height:300px"></div><div class="col" style="top:144px;height:300px"></div>
<svg class="snd"><use href="#sends"/></svg>
<div class="sl" style="top:476px;color:#7fd3ee;font-weight:bold">MASTER</div>
<div class="sl" style="top:499px">AUX</div>
<div class="sl" style="top:522px;color:#7f9399">RECEIVE</div>
<div class="ib" style="top:561px;height:41px"><span style="color:#7fc7dd">Input 1</span></div>
<div class="a" style="left:80px;top:602px;width:2px;height:33px;background:#4a6470"></div><div class="a" style="left:80px;top:634px;width:40px;height:2px;background:#4a6470"></div>
<svg class="a" style="left:117px;top:617px;width:36px;height:36px" viewBox="0 0 40 40"><use href="#mic"/></svg>
<svg class="a" style="left:31px;top:671px;width:36px;height:36px" viewBox="0 0 40 40"><use href="#mic"/></svg>
<div class="a" style="left:66px;top:688px;width:100px;height:2px;background:#4a6470"></div>
<div class="a" style="left:48px;top:706px;width:2px;height:34px;background:#4a6470"></div>
<div class="a" style="left:103px;top:672px;width:60px;height:32px;background:#2e3c43"></div><div class="a" style="left:165px;top:672px;width:10px;height:32px;background:#3a4b53;border-radius:4px"></div>
<svg class="a" style="left:103px;top:672px;width:60px;height:32px" viewBox="0 0 60 32"><circle cx="22" cy="16" r="3.5" fill="#8fb0bc"/><circle cx="38" cy="16" r="3.5" fill="#8fb0bc"/><line x1="22" y1="8" x2="38" y2="16" stroke="#8fb0bc" stroke-width="2"/><line x1="38" y1="16" x2="60" y2="16" stroke="#8fb0bc" stroke-width="2"/></svg>
<div class="lbl" style="left:108px;top:712px">BYPASS</div>
<div class="ins"></div>
<div class="btn" style="left:11px;width:10px;background:#3a4b53;border-radius:4px"></div>
<div class="btn" style="left:22px;width:61px;background:#2e3c43"><svg class="a" style="left:20px;top:5px;width:22px;height:22px" viewBox="0 0 22 22"><path d="M4 6h5l7-4v18l-7-4H4z" fill="none" stroke="#b9ccd2" stroke-width="2"/></svg></div>
<div class="btn" style="left:99px;width:10px;background:#3a4b53;border-radius:4px"></div>
<div class="btn" style="left:110px;width:61px;background:#2e3c43"><svg class="a" style="left:19px;top:4px;width:24px;height:24px" viewBox="0 0 24 24"><circle cx="12" cy="12" r="7" fill="none" stroke="#b9ccd2" stroke-width="2"/><line x1="3" y1="21" x2="21" y2="3" stroke="#b9ccd2" stroke-width="2"/></svg></div>
<div class="a" style="left:51px;top:1008px;width:2px;height:28px;background:#4a6470"></div>
<div class="lbl" style="left:32px;top:1039px">AUTO</div><div class="lbl" style="left:5px;top:1077px">ON</div><div class="lbl" style="left:63px;top:1096px">OFF</div>
<svg class="a" style="left:22px;top:1055px;width:60px;height:48px" viewBox="0 0 60 48"><rect x="8" y="0" width="44" height="7" rx="3" fill="#1f2628"/><line x1="6" y1="14" x2="26" y2="40" stroke="#1f2628" stroke-width="7" stroke-linecap="round"/><line x1="54" y1="14" x2="34" y2="40" stroke="#6a919c" stroke-width="7" stroke-linecap="round"/></svg>
<div class="a" style="left:97px;top:1040px;width:80px;height:85px;border:2px solid #35525c;border-radius:6px"></div>
<div class="a" style="left:107px;top:1050px;width:60px;height:60px;background:#2a363c;border-left:4px solid #3a4b52;border-right:4px solid #3a4b52"><i class="a" style="left:11px;top:11px;width:30px;height:30px;border:6px solid #6a8e9a;border-radius:50%"></i></div>
<div class="lbl" style="left:105px;top:1117px">AUTO</div><div class="a" style="left:155px;top:1119px;width:13px;height:8px;border-radius:3px;background:#2c3a40"></div>
<div class="a" style="left:12px;top:1151px;width:162px;height:2px;background:#3d4d55"></div><div class="a" style="left:12px;top:1207px;width:162px;height:2px;background:#3d4d55"></div>
<svg class="a" style="left:27px;top:1163px;width:44px;height:36px"><use href="#fad"/></svg>
<div class="a" style="left:72px;top:1180px;width:30px;height:2px;background:#4a6470"></div>
<div class="a" style="left:102px;top:1165px;width:70px;height:31px;border:2px solid #35525c;color:#8fa8b0;font-size:16px;text-align:center;line-height:27px;font-weight:normal">IN</div>
<svg class="a" style="left:44px;top:1229px;width:96px;height:96px"><use href="#panbig"/></svg>
<div class="cen">center</div>
<div class="a" style="left:0;top:1370px;width:186px;height:2px;background:#2c3a40"></div>
<div class="nm">Track-05</div>
<div class="bm">M</div><div class="sbox"></div><div class="bs">S</div>
<div class="lbl" style="left:105px;top:1494px">SAFE</div><div class="a" style="left:155px;top:1496px;width:13px;height:8px;border-radius:3px;background:#2c3a40"></div>
<div class="a" style="left:25px;top:1571px;width:52px;height:2px;background:#2c3a40"></div><div class="a" style="left:108px;top:1571px;width:52px;height:2px;background:#2c3a40"></div>
<div class="a" style="left:86px;top:1563px;width:10px;height:20px;background:#000"></div>
</div>
</body></html>
